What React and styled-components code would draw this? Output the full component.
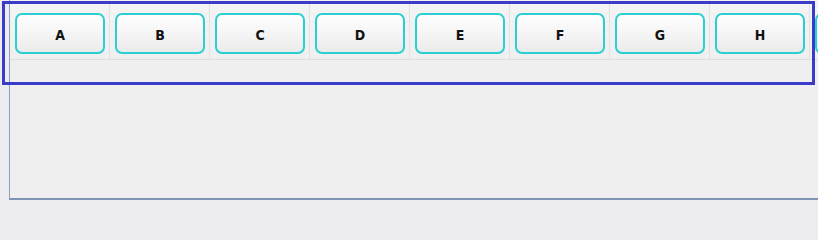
import React from 'react'
import styled, { createGlobalStyle } from 'styled-components'

const GlobalStyle = createGlobalStyle`
  html, body {
    margin: 0;
    padding: 0;
    background: #ececf1;
    overflow: hidden;
  }
`

const Page = styled.div`
  position: relative;
  width: 818px;
  height: 200px;
`

const Panel = styled.div`
  margin-left: 9px;
  height: 198px;
  background: #efefef;
  border-left: 1px solid #8e9fbe;
  border-bottom: 2px solid #7f93b5;
  overflow: hidden;
`

const Toolbar = styled.div`
  display: flex;
  height: 59px;
  border-bottom: 1px solid #dedede;
  background: #f2f2f2;
`

const Cell = styled.div`
  flex: 0 0 100px;
  box-sizing: border-box;
  display: flex;
  justify-content: center;
  padding-top: 13px;
  border-right: 1px solid #e2e2e2;
  background: linear-gradient(#f4f4f4, #efefef);
`

const Key = styled.button`
  width: 90px;
  height: 41px;
  box-sizing: border-box;
  margin-left: 1px;
  border: 2px solid #2bcfd3;
  border-radius: 7px;
  background: linear-gradient(#fefefe, #ebebeb);
  font-family: "DejaVu Sans Condensed", "DejaVu Sans", sans-serif;
  font-weight: bold;
  font-size: 14px;
  color: #111;
  padding: 3px 0 0;
  cursor: pointer;
`

const Highlight = styled.div`
  position: absolute;
  left: 2px;
  top: 1px;
  width: 813px;
  height: 84px;
  box-sizing: border-box;
  border: 3px solid #3b3bc9;
  pointer-events: none;
`

// the ninth key is only a sliver at the right edge, its label falls outside
const keys = ['A', 'B', 'C', 'D', 'E', 'F', 'G', 'H', '']

const App = () => {
  return (
    <Page>
      <GlobalStyle />
      <Panel>
        <Toolbar>
          {keys.map((k, i) => (
            <Cell key={i}>
              <Key aria-label={k || 'I'}>{k}</Key>
            </Cell>
          ))}
        </Toolbar>
      </Panel>
      <Highlight />
    </Page>
  )
}

export default App
